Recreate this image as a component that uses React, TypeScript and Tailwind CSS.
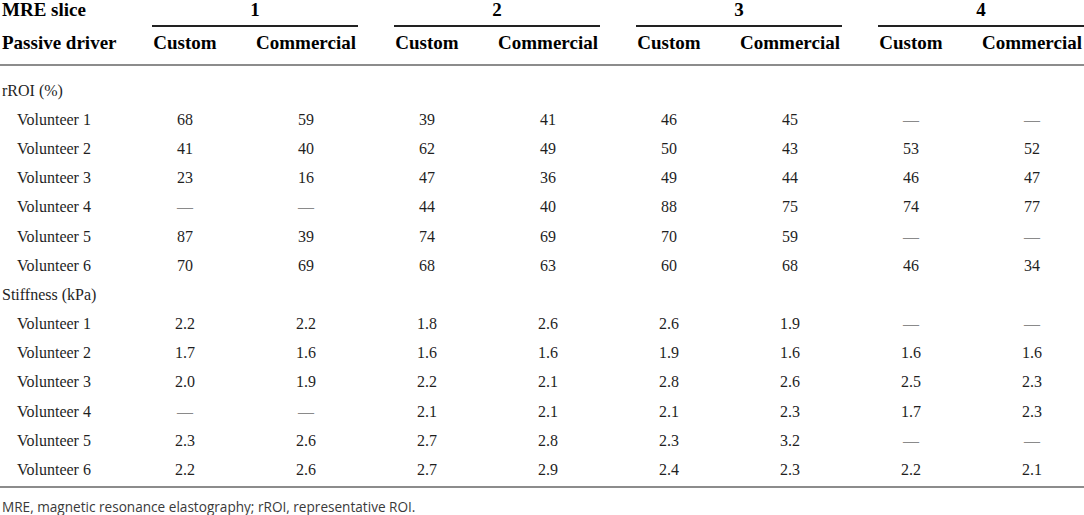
type Row = { label: string; values: string[] };

const rroi: Row[] = [
  { label: 'Volunteer 1', values: ['68', '59', '39', '41', '46', '45', '—', '—'] },
  { label: 'Volunteer 2', values: ['41', '40', '62', '49', '50', '43', '53', '52'] },
  { label: 'Volunteer 3', values: ['23', '16', '47', '36', '49', '44', '46', '47'] },
  { label: 'Volunteer 4', values: ['—', '—', '44', '40', '88', '75', '74', '77'] },
  { label: 'Volunteer 5', values: ['87', '39', '74', '69', '70', '59', '—', '—'] },
  { label: 'Volunteer 6', values: ['70', '69', '68', '63', '60', '68', '46', '34'] },
];

const stiffness: Row[] = [
  { label: 'Volunteer 1', values: ['2.2', '2.2', '1.8', '2.6', '2.6', '1.9', '—', '—'] },
  { label: 'Volunteer 2', values: ['1.7', '1.6', '1.6', '1.6', '1.9', '1.6', '1.6', '1.6'] },
  { label: 'Volunteer 3', values: ['2.0', '1.9', '2.2', '2.1', '2.8', '2.6', '2.5', '2.3'] },
  { label: 'Volunteer 4', values: ['—', '—', '2.1', '2.1', '2.1', '2.3', '1.7', '2.3'] },
  { label: 'Volunteer 5', values: ['2.3', '2.6', '2.7', '2.8', '2.3', '3.2', '—', '—'] },
  { label: 'Volunteer 6', values: ['2.2', '2.6', '2.7', '2.9', '2.4', '2.3', '2.2', '2.1'] },
];

const slices = ['1', '2', '3', '4'];

const serif = "font-['Liberation_Serif','Times_New_Roman',serif]";

const cellPad = (i: number) => (i === 7 ? 'pl-[18px] pr-0' : 'px-[18px]');

function ValueCell({ v, i }: { v: string; i: number }) {
  return (
    <td className={`${cellPad(i)} ${serif} h-[29.2px] text-center align-middle`}>
      {v === '—' ? <span className="text-[#8a8a8a]">—</span> : v}
    </td>
  );
}

function SectionRows({ title, rows }: { title: string; rows: Row[] }) {
  return (
    <>
      <tr>
        <td className={`${serif} h-[29.2px] pl-[2px] align-middle`} colSpan={9}>{title}</td>
      </tr>
      {rows.map(r => (
        <tr key={title + r.label}>
          <td className={`${serif} h-[29.2px] pl-[17px] align-middle whitespace-nowrap`}>{r.label}</td>
          {r.values.map((v, i) => (
            <ValueCell key={i} v={v} i={i} />
          ))}
        </tr>
      ))}
    </>
  );
}

export default function App() {
  return (
    <div className={`w-[1084px] h-[515px] bg-white overflow-hidden text-[#1f1f1f] ${serif}`}>
      <table className={`table-fixed w-[1084px] text-[16px] leading-[20px] ${serif}`}>
        <colgroup>
          <col className="w-[134px]" />
          <col className="w-[102px]" />
          <col className="w-[140px]" />
          <col className="w-[102px]" />
          <col className="w-[140px]" />
          <col className="w-[102px]" />
          <col className="w-[140px]" />
          <col className="w-[102px]" />
          <col className="w-[122px]" />
        </colgroup>
        <thead className="text-[19px] font-bold text-black">
          <tr>
            <th className={`${serif} pl-[2px] text-left align-top font-bold whitespace-nowrap`}>
              <div className="leading-[20px] pb-[7px]">MRE slice</div>
            </th>
            {slices.map((s, i) => (
              <th
                key={s}
                colSpan={2}
                className={`${i === 3 ? 'pl-[18px] pr-0' : 'px-[18px]'} ${serif} align-top font-bold`}
              >
                <div className="leading-[20px] pb-[5px] border-b-2 border-[#222]">{s}</div>
              </th>
            ))}
          </tr>
          <tr>
            <th className={`${serif} pl-[2px] pt-[6px] pb-[11px] text-left font-bold whitespace-nowrap border-b-2 border-[#8c8c8c]`}>
              Passive driver
            </th>
            {Array.from({ length: 8 }).map((_, i) => (
              <th
                key={i}
                className={`${cellPad(i)} ${serif} pt-[6px] pb-[11px] text-center font-bold whitespace-nowrap border-b-2 border-[#8c8c8c]`}
              >
                {i % 2 === 0 ? 'Custom' : 'Commercial'}
              </th>
            ))}
          </tr>
        </thead>
        <tbody>
          <tr>
            <td colSpan={9} className="h-[11px] p-0" />
          </tr>
          <SectionRows title="rROI (%)" rows={rroi} />
          <SectionRows title="Stiffness (kPa)" rows={stiffness} />
          <tr>
            <td colSpan={9} className="h-[2px] p-0 border-b-2 border-[#8c8c8c]" />
          </tr>
        </tbody>
      </table>
      <p className="mt-[10px] pl-[2px] text-[13.6px] leading-[18px] text-[#3a3a3a] font-['Open_Sans','Noto_Sans',sans-serif]">
        MRE, magnetic resonance elastography; rROI, representative ROI.
      </p>
    </div>
  );
}
